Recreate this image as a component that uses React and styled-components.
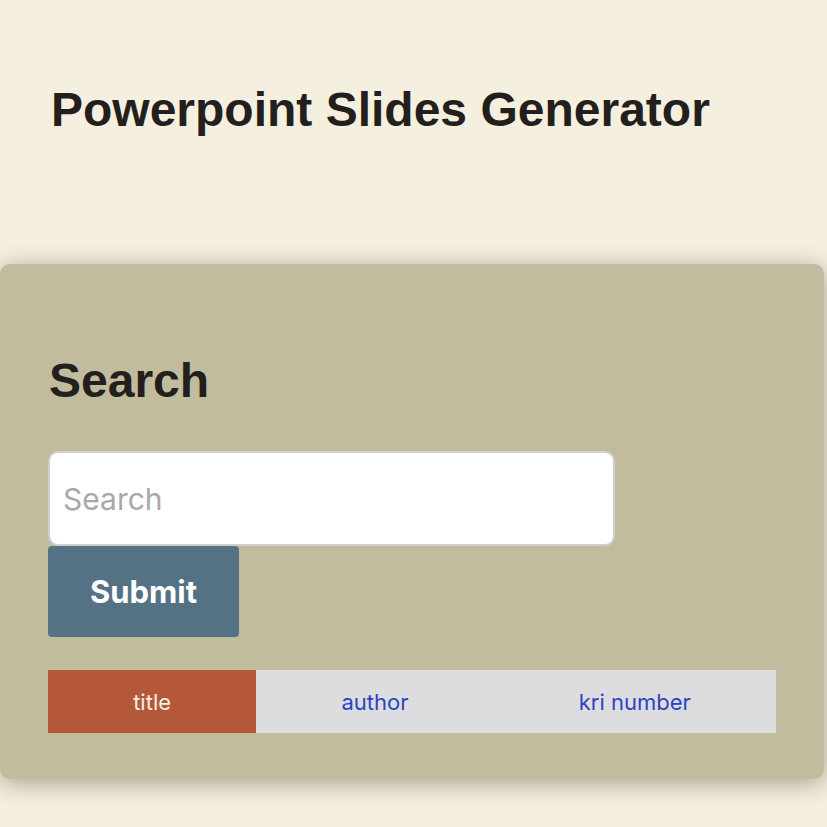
import React, { useState } from "react";
import styled, { createGlobalStyle } from "styled-components";

const Global = createGlobalStyle`
  html, body { margin: 0; padding: 0; background: #f5efdf; }
  body { font-family: "Liberation Sans", Arial, sans-serif; }
  * { box-sizing: border-box; }
`;

const Page = styled.div`
  min-height: 827px;
  background: #f5efdf;
  padding-top: 83px;
  overflow: hidden;
`;

const Title = styled.h1`
  margin: 0 0 127px 51px;
  font-family: "Liberation Sans", Arial, sans-serif;
  font-size: 48px;
  font-weight: 700;
  line-height: 54px;
  color: #231f1c;
`;

const Card = styled.section`
  width: 824px;
  background: #c0bc9d;
  border-radius: 10px;
  box-shadow: 0 4px 24px rgba(50, 40, 20, 0.4);
  padding: 90px 48px 46px 48px;
  display: flex;
  flex-direction: column;
  align-items: flex-start;
`;

const Heading = styled.h2`
  margin: 0 0 43px 1px;
  font-family: "Liberation Sans", Arial, sans-serif;
  font-size: 48px;
  font-weight: 700;
  line-height: 54px;
  color: #231f1c;
`;

const SearchInput = styled.input`
  width: 567px;
  height: 95px;
  border: 2px solid #cfcfcf;
  border-radius: 10px;
  background: #fff;
  padding: 0 13px;
  font-family: Inter, "Noto Sans", sans-serif;
  font-size: 30px;
  color: #333;
  outline: none;
  &::placeholder { color: #a8a8a8; }
`;

const SubmitButton = styled.button`
  width: 191px;
  height: 91px;
  border: none;
  border-radius: 4px;
  background: #557285;
  color: #fff;
  font-family: Inter, "Noto Sans", sans-serif;
  font-size: 31px;
  font-weight: 700;
  padding: 0;
  cursor: pointer;
`;

const Tabs = styled.div`
  margin-top: 33px;
  width: 728px;
  height: 63px;
  display: flex;
  background: #dddde0;
`;

const Tab = styled.button`
  flex: 1 1 auto;
  padding: 0;
  border: none;
  background: ${(p) => (p.$active ? "#b45839" : "transparent")};
  color: ${(p) => (p.$active ? "#f7efe6" : "#2a44c2")};
  font-family: Inter, "Noto Sans", sans-serif;
  font-size: 22px;
  cursor: pointer;
`;

export default function App() {
  const [active, setActive] = useState("title");
  const tabs = ["title", "author", "kri number"];
  return (
    <>
      <Global />
      <Page>
        <Title>Powerpoint Slides Generator</Title>
        <Card>
          <Heading>Search</Heading>
          <SearchInput placeholder="Search" />
          <SubmitButton>Submit</SubmitButton>
          <Tabs>
            {tabs.map((t) => (
              <Tab key={t} $active={active === t} onClick={() => setActive(t)}>
                {t}
              </Tab>
            ))}
          </Tabs>
        </Card>
      </Page>
    </>
  );
}
